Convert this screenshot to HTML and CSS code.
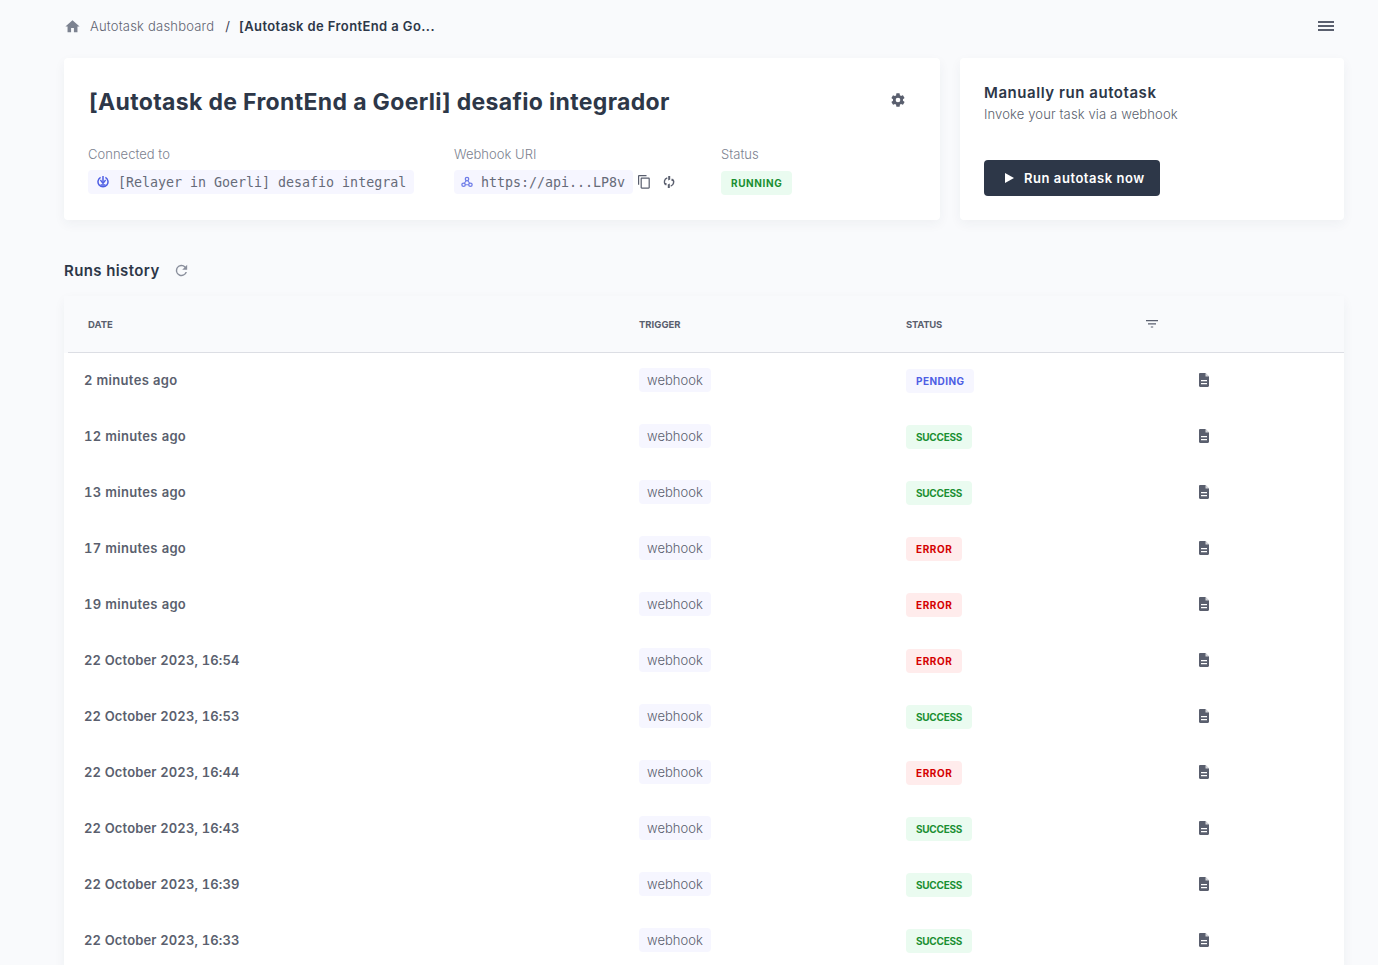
FILE: index.html
```html
<!DOCTYPE html>
<html lang="en">
<head>
<meta charset="utf-8">
<title>Autotask</title>
<link rel="stylesheet" href="styles.css">
</head>
<body>
<svg class="defs" width="0" height="0"><symbol id="doc" viewBox="0 0 10 14"><path fill-rule="evenodd" d="M6.500 0H1.200C.5 0 0 .5 0 1.200v11.600C0 13.500.5 14 1.200 14h7.600c.7 0 1.200-.5 1.200-1.200V3.500zM2 7h6v1.200H2zM2 10h6v1.200H2z"/><path d="M6.500 0v3.500H10z" fill="#fff" opacity=".75"/></symbol></svg>
<main class="page">
  <nav class="crumbs">
    <svg class="home" viewBox="0 0 24 24" width="17" height="17"><path d="M10 20v-6h4v6h5v-8h3L12 3 2 12h3v8z"/></svg>
    <span class="crumb">Autotask dashboard</span>
    <span class="sep">/</span>
    <span class="crumb-current">[Autotask de FrontEnd a Go...</span>
    <svg class="menu" viewBox="0 0 16 10" width="16" height="10"><path d="M0 0h16v2H0zM0 4h16v2H0zM0 8h16v2H0z"/></svg>
  </nav>

  <section class="top">
    <div class="card main-card">
      <div class="title-row">
        <h1>[Autotask de FrontEnd a Goerli] desafio integrador</h1>
        <svg class="gear" viewBox="0 0 24 24" width="16" height="16"><path d="M19.4 13c.04-.33.1-.66.1-1s-.06-.67-.1-1l2.100-1.650c.2-.15.25-.42.12-.64l-2-3.460c-.12-.22-.39-.3-.61-.22l-2.500 1a7.300 7.300 0 0 0-1.700-1l-.37-2.650A.5.5 0 0 0 14 2h-4a.5.5 0 0 0-.5.42L9.130 5.070c-.6.25-1.170.6-1.700 1l-2.500-1c-.22-.08-.49 0-.61.22l-2 3.460c-.13.22-.07.49.12.64L4.540 11c-.04.33-.08.66-.08 1s.04.67.08 1l-2.100 1.650c-.2.15-.25.42-.12.64l2 3.460c.12.22.39.3.61.22l2.500-1c.52.4 1.080.75 1.700 1l.37 2.650c.04.24.25.42.5.42h4c.25 0 .46-.18.5-.42l.37-2.650c.62-.25 1.180-.6 1.700-1l2.500 1c.22.08.49 0 .61-.22l2-3.460c.13-.22.07-.49-.12-.64zM12 15.500a3.500 3.500 0 1 1 0-7 3.500 3.500 0 0 1 0 7z"/></svg>
      </div>
      <div class="meta">
        <div class="meta-connected">
          <div class="meta-label">Connected to</div>
          <div class="meta-value"><span class="chip mono">
            <svg class="chip-icon" viewBox="0 0 12 12" width="12" height="12"><path d="M3.600 1.400a5 5 0 1 0 4.800 0" fill="none" stroke="#4e5ee4" stroke-width="1.500"/><path d="M6 0v6.500" fill="none" stroke="#4e5ee4" stroke-width="1.500"/><path d="M3.400 4 6 7.500 8.600 4M3.500 9h5" fill="none" stroke="#4e5ee4" stroke-width="1.300"/></svg>
            [Relayer in Goerli] desafio integral</span></div>
        </div>
        <div class="meta-webhook">
          <div class="meta-label">Webhook URI</div>
          <div class="meta-value"><span class="chip chip-hook mono">
            <svg class="chip-icon" viewBox="0 0 14 14" width="12" height="12"><circle cx="7" cy="3.600" r="2" fill="none" stroke="#6f7de8" stroke-width="1.500"/><circle cx="3" cy="10.200" r="2" fill="none" stroke="#6f7de8" stroke-width="1.500"/><circle cx="11" cy="10.200" r="2" fill="none" stroke="#6f7de8" stroke-width="1.500"/><path d="M6 5.400 3.600 9M8 5.400 10.400 9M5 10.200h4" stroke="#6f7de8" stroke-width="1.200" fill="none"/></svg>
            https://api...LP8v</span>
            <svg class="act copy" viewBox="0 0 12 14" width="12" height="14"><path d="M8.500 0H1.200C.5 0 0 .5 0 1.200v8.600h1.200V1.200h7.300zM10.600 2.600H3.800c-.7 0-1.200.5-1.200 1.200v8.800c0 .7.5 1.200 1.200 1.200h6.800c.7 0 1.200-.5 1.200-1.200V3.800c0-.7-.5-1.200-1.200-1.200zm0 10H3.800V3.800h6.800z"/></svg>
            <svg class="act sync" viewBox="0 0 12 12" width="12" height="12"><path d="M4.300 1.800A4.300 4.300 0 0 0 2.600 8.900M7.700 10.200a4.300 4.300 0 0 0 1.700-7.100" fill="none" stroke="#5a5f6e" stroke-width="1.400"/><path d="M5.200 0h2v3.600l-2 1zM6.800 12h-2V8.400l2-1zM1 7h2.500v2.500zM11 5H8.500V2.500z" fill="#5a5f6e"/></svg>
          </div>
        </div>
        <div class="meta-status">
          <div class="meta-label">Status</div>
          <div class="meta-value"><span class="badge badge-run">RUNNING</span></div>
        </div>
      </div>
    </div>
    <div class="card run-card">
      <h2>Manually run autotask</h2>
      <p>Invoke your task via a webhook</p>
      <button class="run-btn" type="button">
        <svg viewBox="0 0 9 10" width="9" height="10"><path d="M0 0l9 5-9 5z" fill="#fff"/></svg>
        Run autotask now
      </button>
    </div>
  </section>

  <div class="history-head">
    <h3>Runs history</h3>
    <svg class="refresh" viewBox="0 0 24 24" width="17" height="17"><path d="M17.650 6.350A8 8 0 1 0 19.730 14h-2.080A6 6 0 1 1 12 6c1.660 0 3.140.69 4.220 1.780L13 11h7V4z"/></svg>
  </div>

  <section class="table">
    <div class="thead">
      <span class="th th-date">DATE</span>
      <span class="th">TRIGGER</span>
      <span class="th th-status">STATUS</span>
      <svg class="filter" viewBox="0 0 12 8" width="12" height="8"><path d="M0 0h12v1.200H0zM2 3.200h8v1.200H2zM4.800 6.400h2.400v1.200H4.800z"/></svg>
    </div>
    <div class="row"><span class="date">2 minutes ago</span><span class="tag-cell"><span class="tag">webhook</span></span><span class="badge-cell"><span class="badge badge-pending">PENDING</span></span><svg class="doc"><use href="#doc"/></svg></div>
    <div class="row"><span class="date">12 minutes ago</span><span class="tag-cell"><span class="tag">webhook</span></span><span class="badge-cell"><span class="badge badge-ok">SUCCESS</span></span><svg class="doc"><use href="#doc"/></svg></div>
    <div class="row"><span class="date">13 minutes ago</span><span class="tag-cell"><span class="tag">webhook</span></span><span class="badge-cell"><span class="badge badge-ok">SUCCESS</span></span><svg class="doc"><use href="#doc"/></svg></div>
    <div class="row"><span class="date">17 minutes ago</span><span class="tag-cell"><span class="tag">webhook</span></span><span class="badge-cell"><span class="badge badge-err">ERROR</span></span><svg class="doc"><use href="#doc"/></svg></div>
    <div class="row"><span class="date">19 minutes ago</span><span class="tag-cell"><span class="tag">webhook</span></span><span class="badge-cell"><span class="badge badge-err">ERROR</span></span><svg class="doc"><use href="#doc"/></svg></div>
    <div class="row"><span class="date date-long">22 October 2023, 16:54</span><span class="tag-cell"><span class="tag">webhook</span></span><span class="badge-cell"><span class="badge badge-err">ERROR</span></span><svg class="doc"><use href="#doc"/></svg></div>
    <div class="row"><span class="date date-long">22 October 2023, 16:53</span><span class="tag-cell"><span class="tag">webhook</span></span><span class="badge-cell"><span class="badge badge-ok">SUCCESS</span></span><svg class="doc"><use href="#doc"/></svg></div>
    <div class="row"><span class="date date-long">22 October 2023, 16:44</span><span class="tag-cell"><span class="tag">webhook</span></span><span class="badge-cell"><span class="badge badge-err">ERROR</span></span><svg class="doc"><use href="#doc"/></svg></div>
    <div class="row"><span class="date date-long">22 October 2023, 16:43</span><span class="tag-cell"><span class="tag">webhook</span></span><span class="badge-cell"><span class="badge badge-ok">SUCCESS</span></span><svg class="doc"><use href="#doc"/></svg></div>
    <div class="row"><span class="date date-long">22 October 2023, 16:39</span><span class="tag-cell"><span class="tag">webhook</span></span><span class="badge-cell"><span class="badge badge-ok">SUCCESS</span></span><svg class="doc"><use href="#doc"/></svg></div>
    <div class="row"><span class="date date-long">22 October 2023, 16:33</span><span class="tag-cell"><span class="tag">webhook</span></span><span class="badge-cell"><span class="badge badge-ok">SUCCESS</span></span><svg class="doc"><use href="#doc"/></svg></div>
  </section>
</main>
</body>
</html>
```
FILE: styles.css
```css
* { box-sizing: border-box; }
html, body { margin: 0; height: 965px; overflow: hidden; }
body { background: #f9fafc; font-family: Inter, "Noto Sans", sans-serif; color: #5a5f6e; }
.defs { position: absolute; }
.page { padding: 0 34px 0 64px; }

.crumbs { height: 58px; display: flex; align-items: center; font-size: 13px; padding-bottom: 6px; }
.home { fill: #7c8290; margin-right: 9px; }
.crumb { color: #5f6472; font-weight: 300; letter-spacing: .2px; }
.sep { margin: 0 9px 0 11px; color: #3d4354; }
.crumb-current { color: #2d3748; font-weight: 600; letter-spacing: .4px; }
.menu { fill: #5a5f6e; margin-left: auto; margin-right: 10px; }

.top { display: flex; gap: 20px; }
.card { background: #fff; border-radius: 4px; box-shadow: 0 4px 12px rgba(45, 55, 72, .05); height: 162px; }
.main-card { width: 876px; padding: 28px 24px; }
.run-card { width: 384px; padding: 25px 24px; }

.title-row { display: flex; align-items: center; justify-content: space-between; height: 32px; padding-left: 1px; padding-right: 10px; }
h1 { margin: 0; font-size: 23px; font-weight: 700; color: #2d3748; letter-spacing: .34px; }
.gear { fill: #5a5f6e; margin-top: -4px; }

.meta { display: flex; margin-top: 28px; }
.meta-connected { width: 366px; }
.meta-webhook { width: 267px; }
.meta-label { font-size: 13px; font-weight: 300; color: #7c8290; line-height: 16px; letter-spacing: .03px; }
.meta-value { display: flex; align-items: center; margin-top: 8px; height: 24px; }

.chip { display: inline-flex; align-items: center; gap: 10px; height: 24px; padding: 0 8px 0 9px; background: #f6f6ff; border-radius: 4px; font-size: 13.33px; color: #666b79; white-space: nowrap; }
.chip-hook { gap: 8px; padding-left: 7px; }
.mono { font-family: "DejaVu Sans Mono", "Liberation Mono", monospace; letter-spacing: -.02px; font-weight: 300; }
.chip-icon { flex: none; margin-right: -1px; }
.chip-hook .chip-icon { margin-right: 0; }
.act { fill: #5a5f6e; flex: none; }
.copy { margin-left: 5px; }
.sync { margin-left: 13px; }

.badge { display: inline-flex; align-items: center; height: 24px; padding: 0 10px; border-radius: 4px; font-size: 10px; font-weight: 700; letter-spacing: .45px; }
.badge-ok { background: #eafbf0; color: #1a8f32; letter-spacing: -.25px; }
.badge-run { background: #eafbf0; color: #1a8f32; letter-spacing: .6px; margin-top: 2px; }
.badge-pending { background: #f6f6ff; color: #4e5ee4; }
.badge-err { background: #ffecec; color: #d40000; letter-spacing: .6px; }

h2 { margin: 0; font-size: 15px; line-height: 20px; font-weight: 600; color: #2d3748; letter-spacing: .55px; }
.run-card p { margin: 1px 0 0; font-size: 13px; line-height: 20px; font-weight: 300; color: #5a5f6e; letter-spacing: .13px; }
.run-btn { display: flex; align-items: center; gap: 10px; height: 36px; margin-top: 36px; padding: 0 15px 0 21px; background: #2d3748; border: 0; border-radius: 4px; color: #fff; font: 600 13px Inter, sans-serif; letter-spacing: .55px; }

.history-head { display: flex; align-items: center; gap: 13px; height: 24px; margin-top: 38px; }
h3 { margin: 0; font-size: 15px; font-weight: 600; color: #2d3748; letter-spacing: .4px; }
.refresh { fill: #8a8f9c; }

.table { margin-top: 14px; background: #fff; border-radius: 4px 4px 0 0; box-shadow: 0 4px 12px rgba(45, 55, 72, .05); padding-left: 4px; }
.thead, .row { display: grid; grid-template-columns: 571px 267px 293px 10px; align-items: center; }
.thead { height: 57px; background: #f9fafc; border-bottom: 1px solid #dcdee4; box-shadow: -4px 0 0 #f9fafc; position: relative; }
.th { font-size: 9.5px; font-weight: 700; color: #5a5f6e; }
.th-date { padding-left: 20px; }
.th-status { letter-spacing: -.25px; }
.filter { fill: #5a5f6e; position: absolute; left: 1078px; top: 24px; }
.row { height: 56px; padding-bottom: 2px; }
.date { padding-left: 16px; font-size: 13px; font-weight: 600; color: #5a5f6e; letter-spacing: .32px; font-variant-numeric: tabular-nums; }
.date-long { letter-spacing: .14px; }
.tag-cell, .badge-cell { display: flex; }
.badge-cell { padding-top: 2px; }
.tag { display: block; height: 24px; line-height: 24px; padding: 0 8px; background: #f6f6ff; border-radius: 4px; font-size: 13px; font-weight: 300; letter-spacing: .02px; color: #5a5f6e; }
.doc { fill: #5a5f6e; width: 10px; height: 14px; }
```
